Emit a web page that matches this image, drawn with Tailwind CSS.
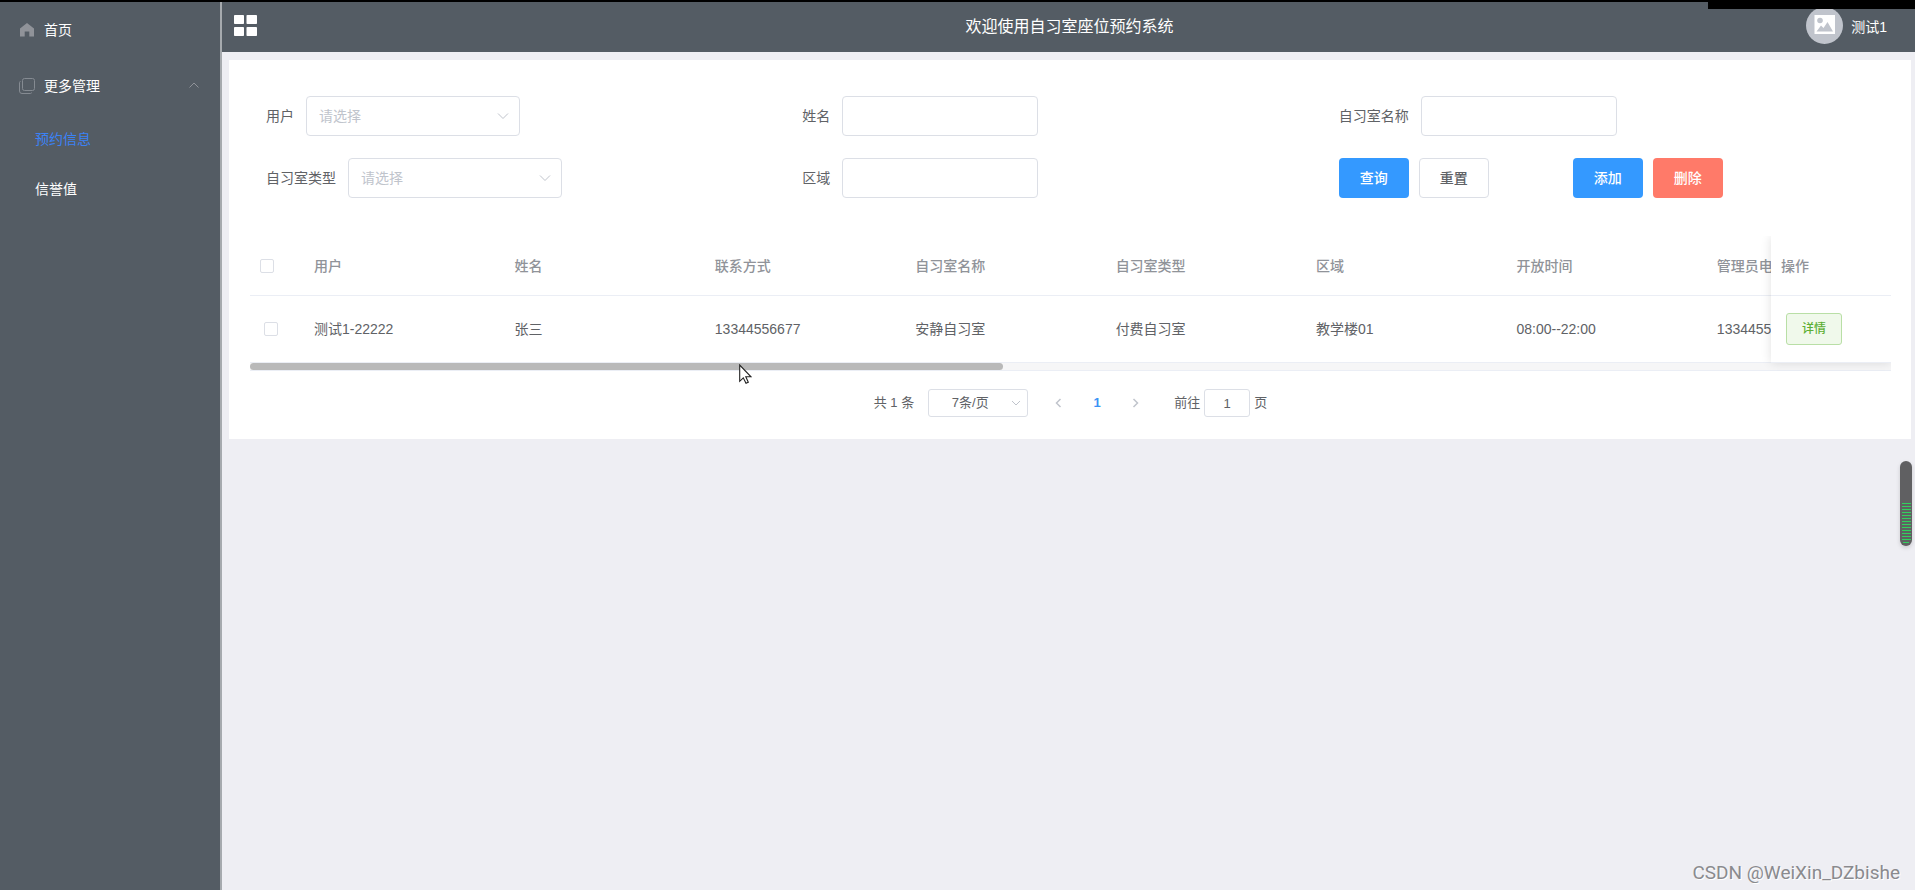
<!DOCTYPE html>
<html lang="zh-CN">
<head>
<meta charset="utf-8">
<title>自习室座位预约系统</title>
<script src="https://cdn.jsdelivr.net/npm/@tailwindcss/browser@4"></script>
</head>
<body class="relative flex min-h-screen flex-col overflow-x-hidden bg-[#eeeef3] font-['Liberation_Sans','Noto_Sans_CJK_SC',sans-serif] text-sm text-[#606266]">
<div class="h-[2px] bg-black"></div>
<div class="flex grow">
  <!-- Side menu -->
  <nav class="w-[222px] shrink-0 border-r-2 border-[#a6aaae] bg-[#545c64] text-white">
    <a href="#" class="flex h-14 items-center gap-2.5 pl-5">
      <svg class="h-3.5 w-3.5 fill-[#909399]" viewBox="0 0 14 14"><path d="M7 0 0 5.5V13.500H4.700V8.500H9.300V13.500H14V5.500Z"/></svg>
      <span>首页</span>
    </a>
    <button class="flex h-14 w-full items-center gap-[9px] pr-5 pl-[19px] text-left">
      <svg class="h-4 w-4 fill-none stroke-[#858b92]" viewBox="0 0 16 16"><rect x="3.500" y="0.500" width="12" height="12" rx="2"/><path d="M1.500 3.500Q.5 3.500.5 4.500V13Q.5 15.500 3 15.500H11.500Q12.500 15.500 12.500 14.500"/></svg>
      <span class="grow">更多管理</span>
      <svg class="h-3 w-3 fill-none stroke-[#909399]" viewBox="0 0 12 12"><path d="M1.500 7.500 6 3 10.500 7.500"/></svg>
    </button>
    <a href="#" class="flex h-[50px] items-center pl-[35px] text-[#3b82f6]">预约信息</a>
    <a href="#" class="flex h-[50px] items-center pl-[35px]">信誉值</a>
  </nav>

  <div class="min-w-0 grow">
    <header class="flex h-[50px] items-center bg-[#545c64] pr-2.5 pl-3 text-white">
      <div class="flex-1">
        <button aria-label="菜单" class="block"><svg class="h-6 w-6 fill-white" viewBox="0 0 24 24"><rect x="0" y="0" width="10" height="9" rx=".8"/><rect x="12.500" y="0" width="10.500" height="9" rx=".8"/><rect x="0" y="12" width="10" height="9" rx=".8"/><rect x="12.500" y="12" width="10.500" height="9" rx=".8"/></svg></button>
      </div>
      <h1 class="text-base">欢迎使用自习室座位预约系统</h1>
      <div class="flex flex-1 items-center justify-end gap-2">
        <svg class="mb-1 h-[37px] w-[37px]" viewBox="0 0 37 37"><circle cx="18.500" cy="18.500" r="18.500" fill="#c0c4cc"/><rect x="8.500" y="8" width="20.500" height="19" fill="#fff"/><circle cx="14" cy="13.500" r="2.800" fill="#c0c4cc"/><path d="M10.500 24.500 15 18.500 17.500 21 21.500 15 27 24.500Z" fill="#c0c4cc"/></svg>
        <span class="mr-[18px]">测试1</span>
      </div>
    </header>

    <main class="mt-2 mr-1 ml-[7px] bg-white pt-9 pr-5 pb-[22px] pl-[21px]">
      <!-- Search form -->
      <form class="grid grid-cols-3 gap-y-[22px] px-4">
        <div class="flex items-center gap-3">
          <label for="user">用户</label>
          <div class="relative">
            <select id="user" class="h-10 w-[214px] appearance-none rounded border border-[#dcdfe6] bg-white px-3 text-[#c0c4cc]"><option>请选择</option></select>
            <svg class="pointer-events-none absolute top-3.5 right-[11px] h-3 w-3 fill-none stroke-[#c0c4cc]" viewBox="0 0 12 12"><path d="M1 3.500 6 8.500 11 3.500"/></svg>
          </div>
        </div>
        <div class="flex items-center gap-3">
          <label for="name">姓名</label>
          <input id="name" type="text" class="h-10 w-[196px] rounded border border-[#dcdfe6] px-4">
        </div>
        <div class="flex items-center gap-3">
          <label for="room">自习室名称</label>
          <input id="room" type="text" class="h-10 w-[196px] rounded border border-[#dcdfe6] px-4">
        </div>
        <div class="flex items-center gap-3">
          <label for="type">自习室类型</label>
          <div class="relative">
            <select id="type" class="h-10 w-[214px] appearance-none rounded border border-[#dcdfe6] bg-white px-3 text-[#c0c4cc]"><option>请选择</option></select>
            <svg class="pointer-events-none absolute top-3.5 right-[11px] h-3 w-3 fill-none stroke-[#c0c4cc]" viewBox="0 0 12 12"><path d="M1 3.500 6 8.500 11 3.500"/></svg>
          </div>
        </div>
        <div class="flex items-center gap-3">
          <label for="area">区域</label>
          <input id="area" type="text" class="h-10 w-[196px] rounded border border-[#dcdfe6] px-4">
        </div>
        <div class="flex items-center gap-[84px]">
          <div class="flex gap-2.5">
            <button type="button" class="h-10 w-[70px] rounded bg-[#3499ff] font-medium text-white">查询</button>
            <button type="button" class="h-10 w-[70px] rounded border border-[#dcdfe6] bg-white font-medium">重置</button>
          </div>
          <div class="flex gap-2.5">
            <button type="button" class="h-10 w-[70px] rounded bg-[#3499ff] font-medium text-white">添加</button>
            <button type="button" class="h-10 w-[70px] rounded bg-[#ff7a69] font-medium text-white">删除</button>
          </div>
        </div>
      </form>

      <!-- Reservation table; the action column stays pinned on the right -->
      <div class="relative mt-[38px] overflow-hidden">
        <div class="overflow-hidden">
          <table class="w-[3581px] table-fixed border-separate border-spacing-0 text-left">
            <colgroup><col class="w-[54px]"><col><col><col><col><col><col><col><col><col span="9"><col class="w-[120px]"></colgroup>
            <thead class="text-[#909399]">
              <tr class="h-[60px] *:border-b *:border-[#ebeef5] *:px-2.5 *:font-medium">
                <th><input type="checkbox" aria-label="全选" class="block h-3.5 w-3.5 appearance-none rounded-xs border border-[#dcdfe6] bg-white"></th>
                <th>用户</th><th>姓名</th><th>联系方式</th><th>自习室名称</th><th>自习室类型</th><th>区域</th><th>开放时间</th><th>管理员电话</th>
                <th colspan="9"></th>
                <th class="sticky right-0 bg-white">操作</th>
              </tr>
            </thead>
            <tbody>
              <tr class="h-[67px] *:border-b *:border-[#ebeef5] *:px-2.5">
                <td><input type="checkbox" aria-label="选择此行" class="ml-1 block h-3.5 w-3.5 appearance-none rounded-xs border border-[#dcdfe6] bg-white"></td>
                <td>测试1-22222</td><td>张三</td><td>13344556677</td><td>安静自习室</td><td>付费自习室</td><td>教学楼01</td><td>08:00--22:00</td><td>13344556677</td>
                <td colspan="9"></td>
                <td class="sticky right-0 bg-white"><button class="ml-[5px] block h-8 w-14 rounded-[3px] border border-[#b9dfa6] bg-[#f0f9eb] text-xs font-medium text-[#5daf34]">详情</button></td>
              </tr>
            </tbody>
          </table>
        </div>
        <div class="h-2 border-b border-[#ebeef5] bg-[#f6f6f7]"><div class="h-[7px] rounded-full bg-[#b9b9b9]" style="width:45.86%"></div></div>
        <div class="pointer-events-none absolute top-0 right-0 bottom-2 w-[120px] shadow-[0_0_10px_rgba(0,0,0,0.12)]"></div>
      </div>

      <!-- Pagination -->
      <div class="mt-[18px] flex items-center justify-center text-[13px]">
        <span>共 1 条</span>
        <div class="relative ml-3.5">
          <select aria-label="每页条数" class="block h-7 w-[100px] appearance-none rounded-[3px] border border-[#dcdfe6] bg-white pr-4 text-center"><option>7条/页</option></select>
          <svg class="pointer-events-none absolute top-2 right-1.5 h-3 w-3 fill-none stroke-[#c0c4cc]" viewBox="0 0 12 12"><path d="M2 4 6 8 10 4"/></svg>
        </div>
        <div class="ml-3 flex items-center">
          <button aria-label="上一页" class="flex w-[38px] justify-center"><svg class="h-3 w-3 fill-none stroke-[#c0c4cc] stroke-[1.5]" viewBox="0 0 12 12"><path d="M7.500 2 3.500 6 7.500 10"/></svg></button>
          <button class="w-[38px] font-bold text-[#3b93f5]">1</button>
          <button aria-label="下一页" class="flex w-[38px] justify-center"><svg class="h-3 w-3 fill-none stroke-[#c0c4cc] stroke-[1.5]" viewBox="0 0 12 12"><path d="M4.500 2 8.500 6 4.500 10"/></svg></button>
        </div>
        <label for="page" class="ml-5">前往</label>
        <input id="page" type="text" value="1" class="mx-1 h-7 w-[46px] rounded-[3px] border border-[#dcdfe6] text-center">
        <span>页</span>
      </div>
    </main>
  </div>
</div>

<!-- Screen overlays: top bar strip, level meter, pointer, watermark -->
<div class="absolute top-0 right-0 h-[9px] w-[207px] bg-black"></div>
<div class="absolute top-[461px] right-[3px] flex h-[85px] w-3 flex-col items-center justify-end gap-0.5 rounded-full bg-[#606062] pb-[3px] shadow-[0_2px_4px_rgba(0,0,0,0.15)] *:h-px *:w-[9px] *:bg-[#30d15c]">
  <i></i><i></i><i></i><i></i><i></i><i></i><i></i><i></i><i></i><i></i><i></i><i></i><i></i><i class="max-w-1.5"></i>
</div>
<svg class="absolute top-[364px] left-[739px] h-5 w-[13px]" viewBox="0 0 13 20"><path d="M.7 1V17.300L4.300 13.800 7 19.300 9.300 18.200 6.800 12.800H12Z" fill="#fff" stroke="#222" stroke-width="1.100"/></svg>
<div class="absolute right-[15px] bottom-1 font-[Roboto,sans-serif] text-[19px] text-[#8a8a8e] [text-shadow:1px_1px_0_#fff]">CSDN @WeiXin_DZbishe</div>
</body>
</html>
